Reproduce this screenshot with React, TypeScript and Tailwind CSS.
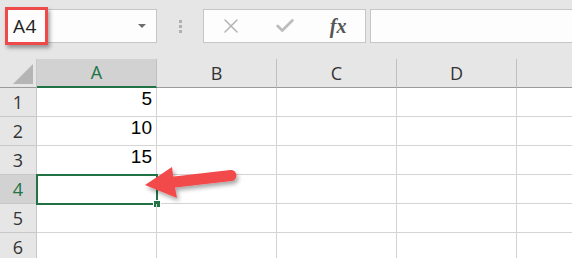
import { X, Check } from "lucide-react";

const cols = ["A", "B", "C", "D"];
const rows = [
  { n: 1, a: "5" },
  { n: 2, a: "10" },
  { n: 3, a: "15" },
  { n: 4, a: "" },
  { n: 5, a: "" },
  { n: 6, a: "" },
];

export default function App() {
  return (
    <div className="relative w-[572px] h-[258px] overflow-hidden bg-white" style={{ fontFamily: "'Liberation Sans', Arial, sans-serif" }}>
      {/* formula bar */}
      <div className="h-[59px] bg-[#e6e6e6] flex items-start pt-[9px]">
        <div className="ml-[5px] w-[152px] h-[34px] bg-[#fdfdfd] border border-[#c6c6c6] flex items-center justify-between pl-[7px] pr-[10px]">
          <span className="text-[19px] text-[#222] tracking-[0.5px]" style={{ fontFamily: "'Open Sans', sans-serif" }}>A4</span>
          <span className="w-0 h-0 border-l-[4px] border-r-[4px] border-t-[4px] border-l-transparent border-r-transparent border-t-[#6d6d6d]" />
        </div>
        <div className="w-[46px] h-[34px] flex flex-col items-center justify-center gap-[2px]">
          <span className="w-[3px] h-[3px] bg-[#b0b0b0]" />
          <span className="w-[3px] h-[3px] bg-[#b0b0b0]" />
          <span className="w-[3px] h-[3px] bg-[#b0b0b0]" />
        </div>
        <div className="w-[163px] h-[34px] bg-[#fdfdfd] border border-[#c6c6c6] flex items-center">
          <div className="w-[54px] flex justify-center">
            <X size={24} strokeWidth={1.5} color="#b4b4b4" />
          </div>
          <div className="w-[54px] flex justify-center">
            <Check size={22} strokeWidth={3} color="#bdbdbd" />
          </div>
          <div className="w-[54px] flex justify-center">
            <span className="text-[20px] italic font-bold text-[#555]" style={{ fontFamily: "'Liberation Serif', 'Times New Roman', serif" }}>fx</span>
          </div>
        </div>
        <div className="ml-[4px] flex-1 h-[34px] bg-[#fdfdfd] border border-r-0 border-[#c6c6c6]" />
      </div>

      {/* column headers */}
      <div className="flex h-[29px] bg-[#e6e6e6]">
        <div className="relative w-[37px] border-r border-b border-[#c8c8c8] border-b-[#9b9b9b]">
          <div className="absolute left-[13px] top-[5px] w-[20px] h-[20px] bg-[#b5b5b5] [clip-path:polygon(100%_0,100%_100%,0_100%)]" />
        </div>
        {cols.map((c, i) => (
          <div
            key={c}
            className={
              "w-[120px] flex items-center justify-center border-r border-[#c0c0c0] text-[18px] " +
              (i === 0
                ? "bg-[#d2d2d2] text-[#217346] border-b-2 border-b-[#217346]"
                : "text-[#333] border-b border-b-[#9b9b9b]")
            }
            style={{ fontFamily: "'Open Sans', sans-serif" }}
          >
            {c}
          </div>
        ))}
        <div className="flex-1 border-b border-b-[#9b9b9b]" />
      </div>

      {/* rows */}
      {rows.map((r) => (
        <div key={r.n} className="flex h-[29px]">
          <div
            className={
              "w-[37px] flex items-center justify-center border-r border-b border-[#c8c8c8] text-[18px] " +
              (r.n === 4 ? "bg-[#d2d2d2] text-[#217346]" : "bg-[#e6e6e6] text-[#333]")
            }
            style={{ fontFamily: "'Open Sans', sans-serif" }}
          >
            {r.n}
          </div>
          <div className="relative w-[120px] flex items-end justify-end pr-[4px] pb-[3px] border-r border-b border-[#d4d4d4] text-[19px] text-black">
            {r.a}
            {r.n === 4 && (
              <>
                <div className="absolute -left-px -top-px w-[122px] h-[31px] border-2 border-[#217346]" />
                <div className="absolute right-[-5px] bottom-[-5px] w-[8px] h-[8px] bg-[#217346] border border-white" />
              </>
            )}
          </div>
          <div className="w-[120px] border-r border-b border-[#d4d4d4]" />
          <div className="w-[120px] border-r border-b border-[#d4d4d4]" />
          <div className="w-[120px] border-r border-b border-[#d4d4d4]" />
          <div className="flex-1 border-b border-[#d4d4d4]" />
        </div>
      ))}

      {/* annotations */}
      <div className="absolute left-[5px] top-[7px] w-[43px] h-[38px] border-[3px] border-[#ef4a4a] shadow-[2px_3px_4px_rgba(0,0,0,0.35)]" />
      <svg className="absolute left-0 top-0" width="572" height="258">
        <defs>
          <filter id="sh" x="-20%" y="-40%" width="140%" height="180%">
            <feDropShadow dx="2" dy="3" stdDeviation="2" floodColor="#000" floodOpacity="0.35" />
          </filter>
        </defs>
        <g filter="url(#sh)" fill="#f24a4b">
          <line x1="166" y1="183" x2="231" y2="175.5" stroke="#f24a4b" strokeWidth="11" strokeLinecap="round" />
          <polygon points="145,185 172,167 174,182 177,198" />
        </g>
      </svg>
    </div>
  );
}
